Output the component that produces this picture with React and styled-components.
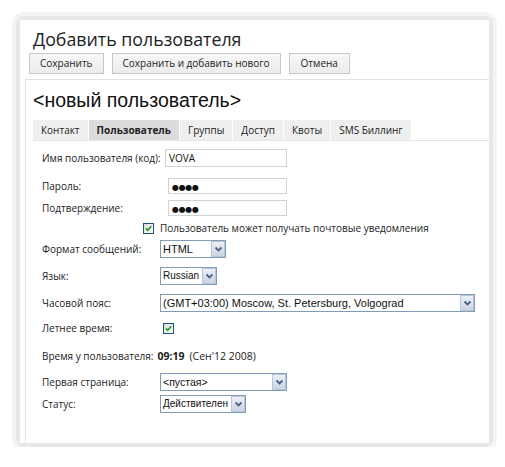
import React from "react";
import styled, { createGlobalStyle } from "styled-components";

const Global = createGlobalStyle`
  html, body { margin: 0; padding: 0; background: #fff; }
  body { font-family: "Open Sans", "Noto Sans", sans-serif; color: #222; }
`;

const Frame = styled.div`
  margin: 16px 0 0 16px;
  width: 469px;
  border: 4px solid #e8e8e8;
  border-radius: 8px;
  box-shadow: 0 0 0 4px #f4f4f4;
  background: #fff;
`;

const Card = styled.div`
  background: #fff;
  height: 423px;
  padding-left: 5px;
  box-sizing: border-box;
  overflow: hidden;
`;

const Header = styled.div`
  padding: 6px 0 0 4px;
`;

const Title = styled.h1`
  margin: 0 0 0 4px;
  font-family: "Open Sans", sans-serif;
  font-weight: 400;
  font-size: 17.8px;
  line-height: 27px;
  color: #222;
`;

const Toolbar = styled.div`
  display: flex;
  gap: 8px;
`;

const Button = styled.button`
  height: 21px;
  padding: 0 ${(p) => p.$pad || 12}px;
  border: 1px solid #c8c8c8;
  background: linear-gradient(#f7f7f7, #ececec);
  font-family: "Open Sans", sans-serif;
  font-size: 10px;
  color: #222;
  line-height: 19px;
`;

const Panel = styled.div`
  margin-top: 5px;
  border-top: 1px solid #e2e2e2;
  border-left: 1px solid #e2e2e2;
  padding-left: 7px;
  height: 400px;
`;

const Heading = styled.h2`
  margin: 8px 0 0 0;
  font-family: "Liberation Sans", Arial, sans-serif;
  font-weight: 400;
  font-size: 19.5px;
  line-height: 24px;
  color: #111;
`;

const TabBar = styled.div`
  margin-top: 8px;
  display: flex;
  height: 20px;
  border-bottom: 1px solid #e4e4e4;
  margin-right: -1px;
`;

const Tab = styled.div`
  padding: 0 ${(p) => p.$pad || 8}px;
  background: ${(p) => (p.$active ? "#dcdcdc" : "#efefef")};
  font-weight: ${(p) => (p.$active ? 700 : 400)};
  font-size: 10px;
  line-height: 20px;
  color: #222;
  margin-right: 1px;
`;

const Form = styled.div`
  padding-left: 9px;
  padding-top: 8px;
`;

const Row = styled.div`
  display: flex;
  align-items: center;
  height: 18px;
  margin-top: ${(p) => p.$mt || 0}px;
  font-size: 10px;
`;

const Label = styled.div`
  width: ${(p) => p.$w}px;
  flex: none;
  white-space: nowrap;
`;

const TextBox = styled.div`
  width: ${(p) => p.$w}px;
  height: ${(p) => p.$h || 16}px;
  box-sizing: border-box;
  border: 1px solid #d2d2d2;
  background: #fff;
  font-family: "Open Sans", sans-serif;
  font-size: 10px;
  line-height: ${(p) => (p.$h || 16) - 2}px;
  padding-left: 3px;
  color: #111;
`;

const Dots = styled.span`
  font-family: "DejaVu Sans", sans-serif;
  font-size: 8px;
  letter-spacing: -0.3px;
`;

const Select = styled.div`
  display: flex;
  width: ${(p) => p.$w}px;
  height: 18px;
  box-sizing: border-box;
  border: 1px solid #7f9db9;
  background: #fff;
`;

const SelectText = styled.div`
  flex: 1;
  min-width: 0;
  font-family: "Liberation Sans", Arial, sans-serif;
  font-size: ${(p) => p.$fs || 11}px;
  line-height: 16px;
  padding-left: 2px;
  color: #111;
  white-space: nowrap;
  overflow: hidden;
`;

const Arrow = styled.div`
  width: 14px;
  height: 16px;
  flex: none;
  box-sizing: border-box;
  border: 1px solid #b9c6d6;
  background: linear-gradient(#eceff5, #cbd4e2);
  display: flex;
  align-items: center;
  justify-content: center;
`;

const CheckWrap = styled.div`
  width: 11px;
  height: 11px;
  box-sizing: border-box;
  border: 1px solid #1c5180;
  background: linear-gradient(135deg, #dcdcd7, #fff);
  display: flex;
  align-items: center;
  justify-content: center;
  margin-left: ${(p) => p.$ml || 0}px;
  flex: none;
`;

const CheckText = styled.span`
  margin-left: 6px;
`;

const TimeBold = styled.span`
  font-weight: 700;
  font-size: 10.5px;
  margin-left: 4px;
`;

const TimeDate = styled.span`
  font-size: 10.5px;
  margin-left: 5px;
`;

const TimeLabel = styled.span`
  font-size: 10px;
`;

const Chevron = () => (
  <svg width="9" height="7" viewBox="0 0 9 7">
    <path d="M1.5 1.5 L4.5 4.5 L7.5 1.5" fill="none" stroke="#4d6185" strokeWidth="1.8" />
  </svg>
);

const Dropdown = ({ w, text, fs }) => (
  <Select $w={w}>
    <SelectText $fs={fs}>{text}</SelectText>
    <Arrow>
      <Chevron />
    </Arrow>
  </Select>
);

const Check = ({ ml }) => (
  <CheckWrap $ml={ml}>
    <svg width="7" height="7" viewBox="0 0 7 7">
      <path d="M0.8 3.4 L2.7 5.3 L6.2 1.2" fill="none" stroke="#21a121" strokeWidth="1.6" />
    </svg>
  </CheckWrap>
);

export default function App() {
  return (
    <>
      <Global />
      <Frame>
        <Card>
          <Header>
            <Title>Добавить пользователя</Title>
            <Toolbar>
              <Button $pad={10}>Сохранить</Button>
              <Button $pad={10}>Сохранить и добавить нового</Button>
              <Button $pad={11}>Отмена</Button>
            </Toolbar>
          </Header>
          <Panel>
            <Heading>&lt;новый пользователь&gt;</Heading>
            <TabBar>
              <Tab>Контакт</Tab>
              <Tab $active>Пользователь</Tab>
              <Tab>Группы</Tab>
              <Tab>Доступ</Tab>
              <Tab>Квоты</Tab>
              <Tab>SMS Биллинг</Tab>
            </TabBar>
            <Form>
              <Row>
                <Label $w={123}>Имя пользователя (код):</Label>
                <TextBox $w={122} $h={18}>VOVA</TextBox>
              </Row>
              <Row $mt={10}>
                <Label $w={126}>Пароль:</Label>
                <TextBox $w={119}><Dots>●●●●</Dots></TextBox>
              </Row>
              <Row $mt={4}>
                <Label $w={126}>Подтверждение:</Label>
                <TextBox $w={119}><Dots>●●●●</Dots></TextBox>
              </Row>
              <Row $mt={2}>
                <Check ml={101} />
                <CheckText>Пользователь может получать почтовые уведомления</CheckText>
              </Row>
              <Row $mt={3}>
                <Label $w={118}>Формат сообщений:</Label>
                <Dropdown w={66} text="HTML" />
              </Row>
              <Row $mt={9}>
                <Label $w={118}>Язык:</Label>
                <Dropdown w={57} text="Russian" fs={10} />
              </Row>
              <Row $mt={9}>
                <Label $w={118}>Часовой пояс:</Label>
                <Dropdown w={315} text="(GMT+03:00) Moscow, St. Petersburg, Volgograd" />
              </Row>
              <Row $mt={7}>
                <Label $w={121}>Летнее время:</Label>
                <Check />
              </Row>
              <Row $mt={10}>
                <TimeLabel>Время у пользователя:</TimeLabel>
                <TimeBold>09:19</TimeBold>
                <TimeDate>(Сен'12 2008)</TimeDate>
              </Row>
              <Row $mt={8}>
                <Label $w={118}>Первая страница:</Label>
                <Dropdown w={127} text="<пустая>" fs={10.5} />
              </Row>
              <Row $mt={4}>
                <Label $w={118}>Статус:</Label>
                <Dropdown w={86} text="Действителен" fs={10} />
              </Row>
            </Form>
          </Panel>
        </Card>
      </Frame>
    </>
  );
}
